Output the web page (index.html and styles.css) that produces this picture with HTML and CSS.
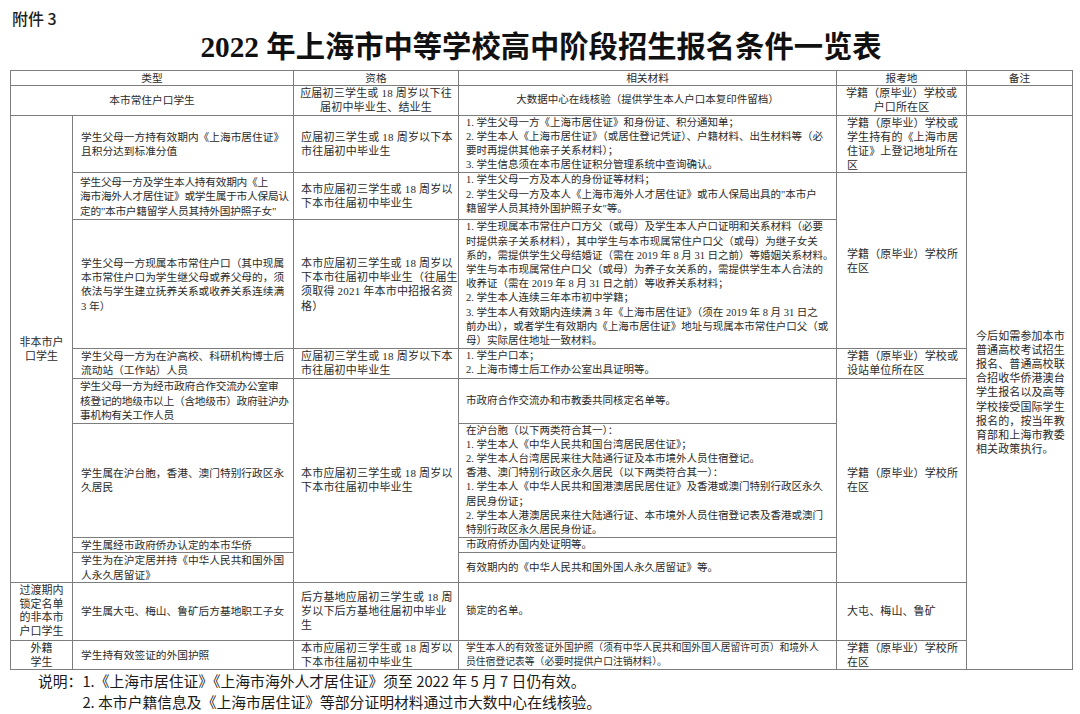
FILE: index.html
```html
<!DOCTYPE html>
<html lang="zh-CN">
<head>
<meta charset="utf-8">
<title>2022年上海市中等学校高中阶段招生报名条件一览表</title>
<link rel="stylesheet" href="styles.css">
</head>
<body>
<div class="page">
  <p class="attach">附件 3</p>
  <h1 class="title">2022 年上海市中等学校高中阶段招生报名条件一览表</h1>
  <table class="grid">
    <colgroup>
      <col class="w1"><col class="w2"><col class="w3"><col class="w4"><col class="w5"><col class="w6">
    </colgroup>
    <tr class="h-head">
      <th colspan="2">类型</th>
      <th>资格</th>
      <th>相关材料</th>
      <th>报考地</th>
      <th>备注</th>
    </tr>
    <tr class="h-local">
      <td colspan="2" class="c">本市常住户口学生</td>
      <td class="c qual">应届初三学生或 18 周岁以下往<br>届初中毕业生、结业生</td>
      <td class="c mat">大数据中心在线核验（提供学生本人户口本复印件留档）</td>
      <td class="c place">学籍（原毕业）学校或<br>户口所在区</td>
      <td></td>
    </tr>
    <tr class="h-r1">
      <td rowspan="8" class="c first">非本市户<br>口学生</td>
      <td class="kind">学生父母一方持有效期内《上海市居住证》<br>且积分达到标准分值</td>
      <td class="qual">应届初三学生或 18 周岁以下本<br>市往届初中毕业生</td>
      <td class="mat top">1. 学生父母一方《上海市居住证》和身份证、积分通知单；<br>2. 学生本人《上海市居住证》（或居住登记凭证）、户籍材料、出生材料等（必<br>要时再提供其他亲子关系材料）；<br>3. 学生信息须在本市居住证积分管理系统中查询确认。</td>
      <td class="place top">学籍（原毕业）学校或<br>学生持有的《上海市居<br>住证》上登记地址所在<br>区</td>
      <td rowspan="10" class="note">今后如需参加本市<br>普通高校考试招生<br>报名、普通高校联<br>合招收华侨港澳台<br>学生报名以及高等<br>学校接受国际学生<br>报名的，按当年教<br>育部和上海市教委<br>相关政策执行。</td>
    </tr>
    <tr class="h-r2">
      <td class="kind narrow">学生父母一方及学生本人持有效期内《上<br>海市海外人才居住证》或学生属于市人保局认<br>定的"本市户籍留学人员其持外国护照子女"</td>
      <td class="qual">本市应届初三学生或 18 周岁以<br>下本市往届初中毕业生</td>
      <td class="mat top">1. 学生父母一方及本人的身份证等材料；<br>2. 学生父母一方及本人《上海市海外人才居住证》或市人保局出具的"本市户<br>籍留学人员其持外国护照子女"等。</td>
      <td rowspan="2" class="place">学籍（原毕业）学校所<br>在区</td>
    </tr>
    <tr class="h-r3">
      <td class="kind">学生父母一方现属本市常住户口（其中现属<br>本市常住户口为学生继父母或养父母的，须<br>依法与学生建立抚养关系或收养关系连续满<br>3 年）</td>
      <td class="qual">本市应届初三学生或 18 周岁以<br>下本市往届初中毕业生（往届生<br>须取得 2021 年本市中招报名资<br>格）</td>
      <td class="mat top">1. 学生现属本市常住户口方父（或母）及学生本人户口证明和关系材料（必要<br>时提供亲子关系材料），其中学生与本市现属常住户口父（或母）为继子女关<br>系的，需提供学生父母结婚证（需在 2019 年 8 月 31 日之前）等婚姻关系材料。<br>学生与本市现属常住户口父（或母）为养子女关系的，需提供学生本人合法的<br>收养证（需在 2019 年 8 月 31 日之前）等收养关系材料；<br>2. 学生本人连续三年本市初中学籍；<br>3. 学生本人有效期内连续满 3 年《上海市居住证》（须在 2019 年 8 月 31 日之<br>前办出），或者学生有效期内《上海市居住证》地址与现属本市常住户口父（或<br>母）实际居住地址一致材料。</td>
    </tr>
    <tr class="h-r4">
      <td class="kind">学生父母一方为在沪高校、科研机构博士后<br>流动站（工作站）人员</td>
      <td class="qual">应届初三学生或 18 周岁以下本<br>市往届初中毕业生</td>
      <td class="mat">1. 学生户口本；<br>2. 上海市博士后工作办公室出具证明等。</td>
      <td class="place">学籍（原毕业）学校或<br>设站单位所在区</td>
    </tr>
    <tr class="h-r5">
      <td class="kind narrow">学生父母一方为经市政府合作交流办公室审<br>核登记的地级市以上（含地级市）政府驻沪办<br>事机构有关工作人员</td>
      <td rowspan="4" class="qual">本市应届初三学生或 18 周岁以<br>下本市往届初中毕业生</td>
      <td class="mat">市政府合作交流办和市教委共同核定名单等。</td>
      <td rowspan="4" class="place">学籍（原毕业）学校所<br>在区</td>
    </tr>
    <tr class="h-r6">
      <td class="kind">学生属在沪台胞，香港、澳门特别行政区永<br>久居民</td>
      <td class="mat top">在沪台胞（以下两类符合其一）：<br>1. 学生本人《中华人民共和国台湾居民居住证》；<br>2. 学生本人台湾居民来往大陆通行证及本市境外人员住宿登记。<br>香港、澳门特别行政区永久居民（以下两类符合其一）：<br>1. 学生本人《中华人民共和国港澳居民居住证》及香港或澳门特别行政区永久<br>居民身份证；<br>2. 学生本人港澳居民来往大陆通行证、本市境外人员住宿登记表及香港或澳门<br>特别行政区永久居民身份证。</td>
    </tr>
    <tr class="h-r7">
      <td class="kind">学生属经市政府侨办认定的本市华侨</td>
      <td class="mat">市政府侨办国内处证明等。</td>
    </tr>
    <tr class="h-r8">
      <td class="kind">学生为在沪定居并持《中华人民共和国外国<br>人永久居留证》</td>
      <td class="mat">有效期内的《中华人民共和国外国人永久居留证》等。</td>
    </tr>
    <tr class="h-r9">
      <td class="c first tight">过渡期内<br>锁定名单<br>的非本市<br>户口学生</td>
      <td class="kind">学生属大屯、梅山、鲁矿后方基地职工子女</td>
      <td class="qual">后方基地应届初三学生或 18 周<br>岁以下后方基地往届初中毕业<br>生</td>
      <td class="mat">锁定的名单。</td>
      <td class="place">大屯、梅山、鲁矿</td>
    </tr>
    <tr class="h-r10">
      <td class="c first">外籍<br>学生</td>
      <td class="kind">学生持有效签证的外国护照</td>
      <td class="qual">本市应届初三学生或 18 周岁以<br>下本市往届初中毕业生</td>
      <td class="mat small">学生本人的有效签证外国护照（须有中华人民共和国外国人居留许可页）和境外人<br>员住宿登记表等（必要时提供户口注销材料）。</td>
      <td class="place">学籍（原毕业）学校所<br>在区</td>
    </tr>
  </table>
  <div class="notes">
    <span class="notes-label">说明：</span>
    <div class="notes-list">
      <p>1.《上海市居住证》《上海市海外人才居住证》须至 2022 年 5 月 7 日仍有效。</p>
      <p>2. 本市户籍信息及《上海市居住证》等部分证明材料通过市大数中心在线核验。</p>
    </div>
  </div>
</div>
</body>
</html>
```

FILE: styles.css
```css
html, body {
  margin: 0;
  padding: 0;
  background: #ffffff;
}

body {
  color: #1e1e1e;
  font-family: "Noto Sans CJK SC", "Noto Sans", sans-serif;
}

.page {
  padding: 8px 8px 0 10px;
}

.attach {
  margin: 0;
  padding-left: 2px;
  font-size: 16px;
  line-height: 20px;
  font-weight: 500;
}

.title {
  margin: 1px 0 5px;
  font-family: "Liberation Serif", "Noto Sans CJK SC", serif;
  font-size: 29.3px;
  line-height: 36px;
  font-weight: 700;
  text-align: center;
  color: #111;
}

.grid {
  width: 1062px;
  border-collapse: collapse;
  table-layout: fixed;
  font-family: "Liberation Serif", "Noto Sans CJK SC", serif;
  font-size: 10.7px;
  line-height: 14.2px;
  color: #2a2a2a;
}

.w1 { width: 62px; }
.w2 { width: 221px; }
.w3 { width: 165px; }
.w4 { width: 378px; }
.w5 { width: 130px; }
.w6 { width: 106px; }

.grid th,
.grid td {
  border: 1px solid #7d7d7d;
  padding: 0 3px 0 7px;
  vertical-align: middle;
  text-align: left;
  white-space: nowrap;
  overflow: hidden;
  font-weight: 400;
}

.grid th {
  text-align: center;
  padding: 0;
}

.h-head { height: 15px; }
.h-local { height: 29px; }
.h-r1 { height: 57px; }
.h-r2 { height: 47px; }
.h-r3 { height: 127px; }
.h-r4 { height: 29px; }
.h-r5 { height: 45px; }
.h-r6 { height: 113px; }
.h-r7 { height: 15px; }
.h-r8 { height: 27px; }
.h-r9 { height: 58px; }
.h-r10 { height: 29px; }

.grid td.c {
  text-align: center;
  padding: 0 2px;
}

.grid td.top {
  vertical-align: top;
}

.grid td.first {
  font-size: 11px;
}

.grid td.tight {
  line-height: 13.6px;
}

.grid td.kind {
  padding-left: 8px;
}

.grid td.kind.narrow {
  padding-left: 7px;
  letter-spacing: -0.25px;
}

.grid td.qual {
  font-size: 11px;
  letter-spacing: 0.2px;
  padding-left: 7px;
}

.grid td.qual.c {
  padding: 0;
}

.grid td.mat {
  font-size: 10.5px;
  padding-left: 7px;
}

.grid td.mat.small {
  font-size: 9.8px;
}

.grid td.mat.c {
  padding: 0;
}

.grid td.place {
  font-size: 11px;
  letter-spacing: 0.1px;
  padding-left: 10px;
}

.grid td.place.c {
  padding: 0;
}

.grid td.note {
  font-size: 11px;
  letter-spacing: 0.1px;
  padding-left: 9px;
}

.notes {
  display: flex;
  margin-left: 28px;
  font-size: 14.8px;
  line-height: 21px;
  color: #1a1a1a;
}

.notes-label {
  flex: none;
}

.notes-list p {
  margin: 0;
}
```
